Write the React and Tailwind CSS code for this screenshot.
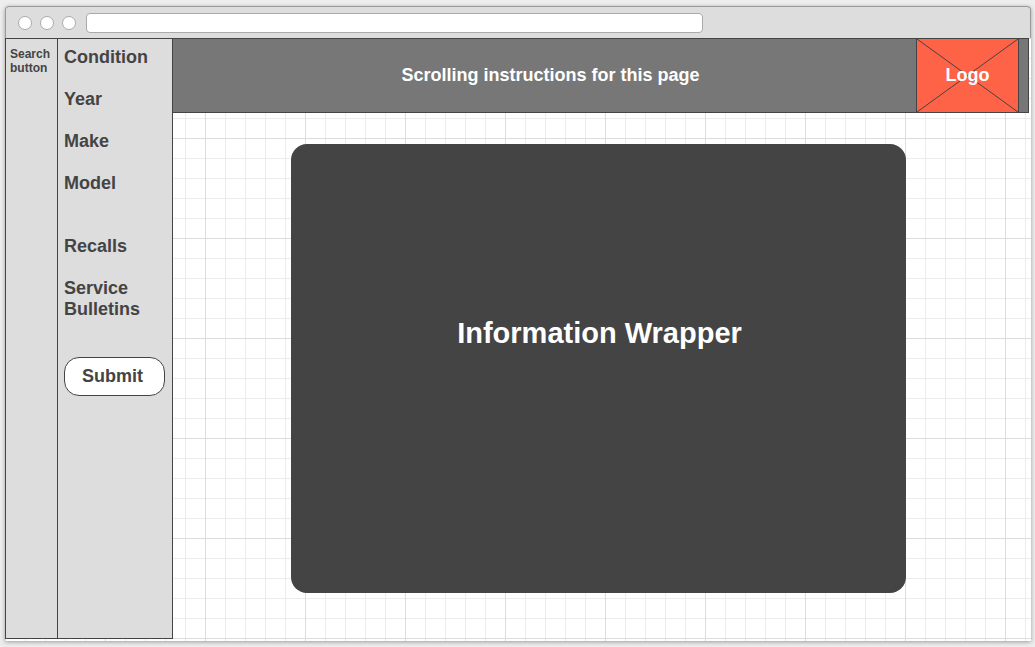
const GRID =
  "bg-[linear-gradient(to_right,#dcdcdc_1px,transparent_1px),linear-gradient(to_bottom,#dcdcdc_1px,transparent_1px),linear-gradient(to_right,#ececec_1px,transparent_1px),linear-gradient(to_bottom,#ececec_1px,transparent_1px)] bg-[size:100px_100px,100px_100px,20px_20px,20px_20px]";

function TitleBar() {
  return (
    <header className="flex h-8 items-center gap-2 rounded-t-[4px] border border-b-0 border-[#999] bg-[#ddd] pl-3">
      <span className="size-3.5 rounded-full border border-[#aaa] bg-white" />
      <span className="size-3.5 rounded-full border border-[#aaa] bg-white" />
      <span className="size-3.5 rounded-full border border-[#aaa] bg-white" />
      <input
        type="text"
        aria-label="Address"
        className="ml-0.5 h-5 w-[61%] rounded-[4px] border border-[#aaa] bg-white px-2 text-xs outline-none"
      />
    </header>
  );
}

function Filters() {
  return (
    <form
      className="flex w-[115px] shrink-0 flex-col border border-l-0 border-[#444] bg-[#ddd] pt-2 pr-[7px] pl-1.5 text-[18px] leading-[21px]"
      onSubmit={(event) => event.preventDefault()}
    >
      <ul className="flex flex-col gap-[21px]">
        <li>Condition</li>
        <li>Year</li>
        <li>Make</li>
        <li>Model</li>
      </ul>
      <ul className="mt-[42px] flex flex-col gap-[21px]">
        <li>Recalls</li>
        <li>Service Bulletins</li>
      </ul>
      <button
        type="submit"
        className="mt-[37px] h-[39px] rounded-[15px] border border-[#444] bg-white pr-1"
      >
        Submit
      </button>
    </form>
  );
}

function Logo() {
  return (
    <div className="relative flex w-[103px] items-center justify-center border-x border-[#444] bg-[#ff6347] text-[18px]">
      <svg
        className="absolute inset-0 size-full"
        viewBox="0 0 100 100"
        preserveAspectRatio="none"
        aria-hidden="true"
      >
        <path
          d="M0 0L100 100M100 0L0 100"
          stroke="#444"
          strokeWidth="1"
          vectorEffect="non-scaling-stroke"
          fill="none"
        />
      </svg>
      <span className="relative">Logo</span>
    </div>
  );
}

export default function App() {
  return (
    <div className="flex min-h-screen flex-col bg-[#ededed] pt-1.5 pr-1 pb-1.5 pl-[5px] font-['Liberation_Sans',Arial,sans-serif] font-bold text-[#444]">
      <div className="flex flex-1 flex-col rounded-t-[4px] bg-white shadow-[0_1px_4px_rgba(0,0,0,0.35)]">
        <TitleBar />
        <div className={`flex flex-1 pb-0.5 ${GRID}`}>
          <aside className="w-[53px] shrink-0 border border-[#444] bg-[#ddd] pt-2 pl-1">
            <button type="button" className="text-left text-[12px] leading-[14px]">
              Search
              <br />
              button
            </button>
          </aside>
          <Filters />
          <div className="flex flex-1 flex-col">
            <div className="-ml-px mr-0.5 flex h-[75px] border border-[#444] bg-[#777] pr-[9px] text-white">
              <p className="flex flex-1 items-center justify-center pl-3 text-[18px]">
                Scrolling instructions for this page
              </p>
              <Logo />
            </div>
            <main className="mt-[31px] mr-[125px] mb-[46px] ml-[118px] flex flex-1 items-center justify-center rounded-2xl bg-[#444] pb-[72px] pl-0.5 text-white">
              <h1 className="text-[29px] leading-8">Information Wrapper</h1>
            </main>
          </div>
        </div>
      </div>
    </div>
  );
}
